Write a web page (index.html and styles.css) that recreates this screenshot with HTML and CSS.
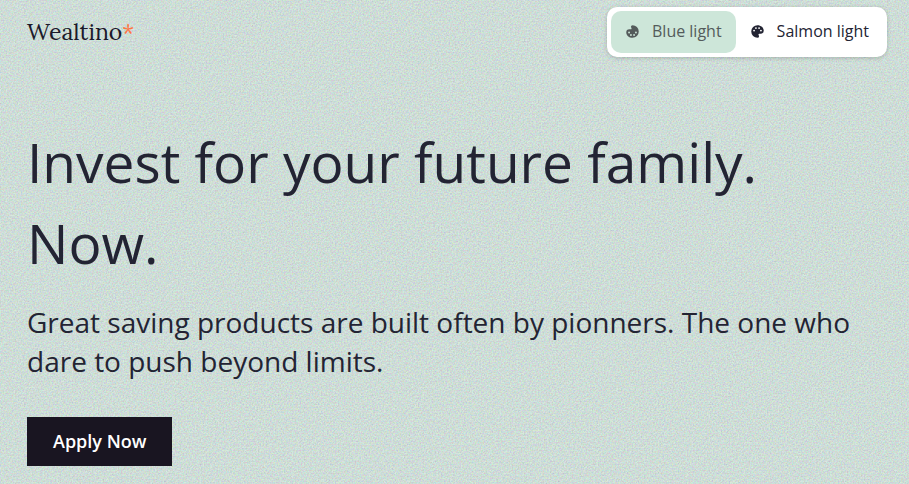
FILE: index.html
```html
<!DOCTYPE html>
<html lang="en">
<head>
<meta charset="utf-8">
<meta name="viewport" content="width=device-width, initial-scale=1">
<title>Wealtino</title>
<link rel="stylesheet" href="styles.css">
</head>
<body>
<svg class="grain" aria-hidden="true">
  <filter id="grain" x="0" y="0" width="100%" height="100%" color-interpolation-filters="sRGB">
    <feTurbulence type="fractalNoise" baseFrequency="0.65" numOctaves="3" stitchTiles="stitch"/>
    <feColorMatrix values="1.3 0 0 0 0.18  0 1.3 0 0 0.09  0 0 1.3 0 0.18  0 0 0 0 1"/>
  </filter>
  <rect width="100%" height="100%" filter="url(#grain)"/>
</svg>
<header class="header">
  <a class="logo" href="#">Wealtino<span class="logo-star">*</span></a>
  <div class="themes" role="group" aria-label="Theme">
    <button class="theme theme-active" type="button" disabled>
      <svg class="icon icon-turned" viewBox="0 0 24 24" aria-hidden="true"><path d="M17.5 12A1.5 1.5 0 0 1 16 10.500A1.500 1.500 0 0 1 17.500 9A1.500 1.500 0 0 1 19 10.500A1.500 1.500 0 0 1 17.500 12M14.500 8A1.500 1.500 0 0 1 13 6.500A1.500 1.500 0 0 1 14.500 5A1.500 1.500 0 0 1 16 6.500A1.500 1.500 0 0 1 14.500 8M9.500 8A1.500 1.500 0 0 1 8 6.500A1.500 1.500 0 0 1 9.500 5A1.500 1.500 0 0 1 11 6.500A1.500 1.500 0 0 1 9.500 8M6.500 12A1.500 1.500 0 0 1 5 10.500A1.500 1.500 0 0 1 6.500 9A1.500 1.500 0 0 1 8 10.500A1.500 1.500 0 0 1 6.500 12M12 2A10 10 0 0 0 2 12A10 10 0 0 0 12 22A2.500 2.500 0 0 0 14.500 19.500C14.500 18.860 14.250 18.270 13.850 17.830C13.620 17.570 13.500 17.260 13.500 16.900C13.500 16.100 14.100 15.500 14.900 15.500H17A5 5 0 0 0 22 10.500C22 5.800 17.500 2 12 2Z"/></svg>
      Blue light
    </button>
    <button class="theme" type="button">
      <svg class="icon" viewBox="0 0 24 24" aria-hidden="true"><path d="M17.5 12A1.5 1.5 0 0 1 16 10.500A1.500 1.500 0 0 1 17.500 9A1.500 1.500 0 0 1 19 10.500A1.500 1.500 0 0 1 17.500 12M14.500 8A1.500 1.500 0 0 1 13 6.500A1.500 1.500 0 0 1 14.500 5A1.500 1.500 0 0 1 16 6.500A1.500 1.500 0 0 1 14.500 8M9.500 8A1.500 1.500 0 0 1 8 6.500A1.500 1.500 0 0 1 9.500 5A1.500 1.500 0 0 1 11 6.500A1.500 1.500 0 0 1 9.500 8M6.500 12A1.500 1.500 0 0 1 5 10.500A1.500 1.500 0 0 1 6.500 9A1.500 1.500 0 0 1 8 10.500A1.500 1.500 0 0 1 6.500 12M12 2A10 10 0 0 0 2 12A10 10 0 0 0 12 22A2.500 2.500 0 0 0 14.500 19.500C14.500 18.860 14.250 18.270 13.850 17.830C13.620 17.570 13.500 17.260 13.500 16.900C13.500 16.100 14.100 15.500 14.900 15.500H17A5 5 0 0 0 22 10.500C22 5.800 17.500 2 12 2Z"/></svg>
      Salmon light
    </button>
  </div>
</header>
<main class="hero">
  <h1 class="title">Invest for your future family. Now.</h1>
  <p class="lead">Great saving products are built often by pionners. The one who dare to push beyond limits.</p>
  <a class="cta" href="#">Apply Now</a>
</main>
</body>
</html>
```
FILE: styles.css
```css
* {
  box-sizing: border-box;
}

body {
  margin: 0;
  min-height: 100vh;
  position: relative;
  background: #cde6d9;
  color: #232433;
  font-family: "Open Sans", sans-serif;
}

.grain {
  position: absolute;
  inset: 0;
  z-index: -1;
  width: 100%;
  height: 100%;
  opacity: 0.22;
}

.header {
  display: flex;
  align-items: center;
  justify-content: space-between;
  padding: 7px 22px 0 27px;
}

.logo {
  color: #1b1a2b;
  font-family: Lora, "Liberation Serif", serif;
  font-size: 23px;
  line-height: 32px;
  text-decoration: none;
}

.logo-star {
  color: #ff7443;
}

.themes {
  display: flex;
  padding: 4px;
  border-radius: 10px;
  background: #fff;
  box-shadow: 0 1px 4px rgb(0 0 0 / 20%);
}

.theme {
  display: flex;
  align-items: center;
  gap: 12px;
  height: 42px;
  padding: 0 14px 2px;
  border: 0;
  border-radius: 10px;
  background: none;
  color: #232433;
  font: 16px/20px "Open Sans", sans-serif;
}

.theme-active {
  background: #cde6d9;
  color: #545b5b;
}

.icon {
  width: 15px;
  height: 15px;
  fill: currentColor;
}

.icon-turned {
  transform: rotate(180deg);
}

.hero {
  padding: 64px 27px 18px;
}

.title {
  margin: 0 0 20px;
  font-size: 55px;
  font-weight: 400;
  line-height: 81px;
}

.lead {
  margin: 0 0 36px;
  font-size: 28px;
  line-height: 39px;
}

.cta {
  display: inline-block;
  padding: 12px 26px;
  background: #191521;
  color: #fff;
  font-size: 18px;
  font-weight: 600;
  line-height: 25px;
  text-decoration: none;
}
```
